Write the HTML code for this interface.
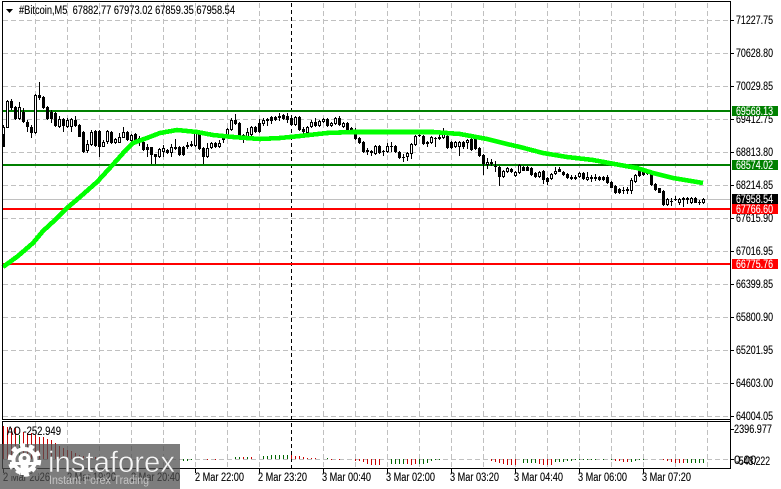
<!DOCTYPE html>
<html><head><meta charset="utf-8"><style>
html,body{margin:0;padding:0;background:#fff;width:781px;height:489px;overflow:hidden}
svg{display:block}
text{font-family:"Liberation Sans",sans-serif;font-size:11.5px;fill:#000;stroke:#000;stroke-width:.12px}
.w text{fill:#fff;stroke:#fff}
.g{stroke:#c0c0c0;stroke-width:1;stroke-dasharray:5 3;fill:none}
</style></head><body>
<svg width="781" height="489" viewBox="0 0 781 489" xmlns="http://www.w3.org/2000/svg">
<rect width="781" height="489" fill="#fff"/>
<g shape-rendering="crispEdges">
<path class="g" d="M3 20.5H730M3 53.5H730M3 86.5H730M3 119.5H730M3 152.5H730M3 185.5H730M3 218.5H730M3 251.5H730M3 284.5H730M3 317.5H730M3 350.5H730M3 383.5H730M3 416.5H730M3 459.5H730"/>
<path class="g" d="M35.5 3V420M67.5 3V420M99.5 3V420M131.5 3V420M163.5 3V420M195.5 3V420M227.5 3V420M259.5 3V420M323.5 3V420M355.5 3V420M387.5 3V420M419.5 3V420M451.5 3V420M483.5 3V420M515.5 3V420M547.5 3V420M579.5 3V420M611.5 3V420M643.5 3V420M675.5 3V420M707.5 3V420M35.5 422V468M67.5 422V468M99.5 422V468M131.5 422V468M163.5 422V468M195.5 422V468M227.5 422V468M259.5 422V468M323.5 422V468M355.5 422V468M387.5 422V468M419.5 422V468M451.5 422V468M483.5 422V468M515.5 422V468M547.5 422V468M579.5 422V468M611.5 422V468M643.5 422V468M675.5 422V468M707.5 422V468"/>
<path d="M3 199.5H730" stroke="#c0c0c0" fill="none"/>
<path d="M291.5 3V468" stroke="#000" stroke-dasharray="4 3" fill="none"/>
<path d="M3 110.5H730M3 111.5H730M3 164.5H730M3 165.5H730" stroke="#008000" fill="none"/>
<path d="M3 208.5H730M3 209.5H730M3 263.5H730M3 264.5H730" stroke="#f00" fill="none"/>
<!-- candle wicks -->
<path stroke="#000" fill="none" d="M3.5 125V147M7.5 100V128M11.5 99V110M15.5 106V120M19.5 102V120M23.5 108V123M27.5 120V132M31.5 125V138M35.5 94V134M39.5 82V100M43.5 96V109M47.5 106V120M51.5 110V123M55.5 112V127M59.5 116V128M63.5 118V132M67.5 118V128M71.5 118V132M75.5 116V127M79.5 124V137M83.5 131V153M87.5 140V153M91.5 130V146M95.5 130V147M99.5 130V157M103.5 140V147M107.5 130V144M111.5 131V144M115.5 138V144M119.5 133V143M123.5 127V138M127.5 131V141M131.5 134V142M135.5 133V141M139.5 136V146M143.5 141V151M147.5 144V157M151.5 147V164M155.5 154V164M159.5 148V158M163.5 145V157M167.5 149V154M171.5 144V157M175.5 139V150M179.5 146V156M183.5 146V156M187.5 142V149M191.5 141V147M195.5 131V147M199.5 131V150M203.5 147V164M207.5 143V158M211.5 142V149M215.5 142V148M219.5 140V148M223.5 136V143M227.5 128V138M231.5 118V131M235.5 114V125M239.5 122V137M243.5 134V143M247.5 128V138M251.5 126V136M255.5 126V133M259.5 119V133M263.5 118V126M267.5 118V126M271.5 116V124M275.5 116V121M279.5 113V121M283.5 114V120M287.5 113V123M291.5 117V126M295.5 116V126M299.5 116V131M303.5 127V134M307.5 126V134M311.5 120V128M315.5 118V127M319.5 120V127M323.5 118V123M327.5 118V127M331.5 122V127M335.5 117V125M339.5 116V126M343.5 122V128M347.5 122V132M351.5 127V132M355.5 128V140M359.5 137V144M363.5 141V153M367.5 148V155M371.5 150V156M375.5 145V155M379.5 145V154M383.5 150V156M387.5 143V153M391.5 142V152M395.5 145V153M399.5 151V159M403.5 154V162M407.5 152V161M411.5 143V159M415.5 135V146M419.5 133V137M423.5 135V145M427.5 141V147M431.5 136V144M435.5 137V147M439.5 135V140M443.5 128V139M447.5 135V149M451.5 141V149M455.5 141V148M459.5 141V156M463.5 141V149M467.5 139V149M471.5 138V151M475.5 138V150M479.5 147V157M483.5 154V175M487.5 158V169M491.5 159V166M495.5 161V172M499.5 166V186M503.5 170V178M507.5 167V173M511.5 168V173M515.5 171V177M519.5 164V174M523.5 166V171M527.5 166V171M531.5 167V176M535.5 172V178M539.5 171V178M543.5 170V184M547.5 177V185M551.5 173V180M555.5 167V175M559.5 167V172M563.5 171V176M567.5 173V179M571.5 175V180M575.5 175V180M579.5 172V178M583.5 172V180M587.5 172V181M591.5 175V182M595.5 174V181M599.5 176V181M603.5 176V181M607.5 175V184M611.5 181V188M615.5 185V194M619.5 188V194M623.5 187V194M627.5 187V194M631.5 178V194M635.5 174V183M639.5 167V177M643.5 170V176M647.5 169V175M651.5 172V186M655.5 183V191M659.5 188V193M663.5 190V206M667.5 198V206M671.5 198V206M675.5 196V201M679.5 198V205M683.5 197V207M687.5 197V204M691.5 197V204M695.5 197V203M699.5 200V205M703.5 198V204"/>
<!-- candle bodies -->
<path stroke="#000" stroke-width="3" fill="none" d="M3.5 127V147M7.5 101V128M11.5 101V108M15.5 107V119M19.5 107V119M23.5 112V122M27.5 122V127M31.5 127V133M35.5 95V133M39.5 95V98M43.5 97V108M47.5 107V119M51.5 112V119M55.5 113V126M59.5 119V127M63.5 119V126M67.5 120V127M71.5 119V127M75.5 120V126M79.5 125V137M83.5 132V152M87.5 144V151M91.5 132V145M95.5 131V146M99.5 131V147M103.5 142V147M107.5 131V142M111.5 132V143M115.5 139V143M119.5 137V143M123.5 132V138M127.5 132V140M131.5 135V141M135.5 134V140M139.5 138V142M143.5 142V150M147.5 147V150M151.5 147V155M155.5 154V157M159.5 149V157M163.5 148V152M167.5 150V153M171.5 147V153M175.5 147V149M179.5 147V155M183.5 147V155M187.5 145V147M191.5 144V146M195.5 132V146M199.5 132V149M203.5 148V157M207.5 148V157M211.5 143V148M215.5 143V147M219.5 143V147M223.5 137V140M227.5 129V137M231.5 120V130M235.5 120V124M239.5 123V136M243.5 135V137M247.5 132V137M251.5 127V135M255.5 127V132M259.5 123V132M263.5 120V124M267.5 119V121M271.5 117V121M275.5 117V120M279.5 116V118M283.5 115V119M287.5 116V120M291.5 118V125M295.5 117V125M299.5 117V130M303.5 129V132M307.5 127V133M311.5 122V127M315.5 122V126M319.5 121V126M323.5 119V122M327.5 119V126M331.5 123V126M335.5 118V124M339.5 118V125M343.5 123V127M347.5 123V131M351.5 128V131M355.5 130V139M359.5 138V143M363.5 142V152M367.5 150V152M371.5 151V153M375.5 146V154M379.5 146V153M383.5 151V152M387.5 146V152M391.5 146V147M395.5 146V152M399.5 152V158M403.5 157V158M407.5 153V157M411.5 144V154M415.5 136V145M419.5 135V136M423.5 136V144M427.5 142V144M431.5 137V143M435.5 138V139M439.5 137V139M443.5 132V138M447.5 136V148M451.5 142V148M455.5 142V147M459.5 142V147M463.5 142V147M467.5 140V143M471.5 139V150M475.5 139V149M479.5 148V156M483.5 155V164M487.5 162V165M491.5 162V164M495.5 166V167M499.5 167V177M503.5 171V177M507.5 168V172M511.5 169V172M515.5 172V176M519.5 165V173M523.5 167V171M527.5 167V171M531.5 168V175M535.5 173V177M539.5 172V177M543.5 171V180M547.5 178V182M551.5 174V179M555.5 171V174M559.5 169V172M563.5 172V175M567.5 174V178M571.5 177V179M575.5 177V179M579.5 173V177M583.5 173V179M587.5 177V180M591.5 177V179M595.5 177V179M599.5 177V180M603.5 177V180M607.5 177V183M611.5 182V188M615.5 186V193M619.5 189V193M623.5 190V191M627.5 189V191M631.5 180V191M635.5 175V182M639.5 167V176M643.5 172V175M647.5 173V174M651.5 173V185M655.5 184V190M659.5 188V193M663.5 191V205M667.5 199V205M671.5 201V202M675.5 199V200M679.5 199V203M683.5 198V200M687.5 198V200M691.5 198V203M695.5 198V203M699.5 202V203M703.5 199V203"/>
<path stroke="#fff" fill="none" d="M3.5 128V134M7.5 102V127M19.5 108V118M35.5 96V132M59.5 120V126M67.5 121V126M71.5 120V126M87.5 145V150M91.5 133V144M103.5 143V146M107.5 132V141M115.5 140V142M119.5 138V142M123.5 133V137M131.5 136V140M159.5 150V156M163.5 149V151M171.5 148V152M195.5 133V145M207.5 149V156M211.5 144V147M219.5 144V146M227.5 130V136M231.5 121V129M247.5 133V136M251.5 128V134M263.5 121V123M295.5 118V124M307.5 128V132M311.5 123V126M319.5 122V125M323.5 120V121M331.5 124V125M335.5 119V123M343.5 124V126M375.5 147V153M387.5 147V151M407.5 154V156M411.5 145V153M415.5 137V144M431.5 138V142M443.5 133V137M455.5 143V146M459.5 143V146M467.5 141V142M487.5 163V164M503.5 172V176M507.5 169V171M515.5 173V175M519.5 166V172M539.5 173V176M551.5 175V178M555.5 172V173M579.5 174V176M587.5 178V179M631.5 181V190M635.5 176V181M667.5 200V204M679.5 200V202M691.5 199V202M703.5 200V202"/>
</g>
<!-- moving average -->
<path fill="none" stroke="#00ff00" stroke-width="4.600" stroke-linejoin="round" shape-rendering="crispEdges" d="M3 267L18 256L33 243L43 231L55 220L67 208L80 197L97 182L108 170L117 160L125 151L133 143L147 138L160 133L177 130L197 132L213 135L233 137L260 139L280 138L300 136L327 133L353 132L393 132L433 132L460 134L487 139L507 144L520 147L543 153L567 157L593 160L620 165L637 168L653 173L673 178L703 183"/>
<!-- AO -->
<g shape-rendering="crispEdges" fill="none">
<path stroke="#c80000" d="M3.500 426V459M7.500 427V459M11.500 428V459M15.500 428V459M23.500 432V459M27.500 433V459M31.500 433V459M35.500 435V459M39.500 437V459M43.500 437V459M47.500 439V459M51.500 440V459M55.500 443V459M59.500 446V459M63.500 448V459M67.500 450V459M71.500 451V459M75.500 453V459M79.500 455V459M83.500 456V459M91.500 457V459M95.500 457V459M99.500 458V459M115.500 458V459M207.500 459V460M215.500 459V460M243.500 457V459M251.500 457V459M291.500 455V459M295.500 456V459M299.500 456V459M303.500 457V459M307.500 458V459M311.500 458V459M315.500 458V459M331.500 459V460M339.500 459V460M355.500 459V461M359.500 459V461M363.500 459V462M367.500 459V464M371.500 459V465M375.500 459V465M379.500 459V465M407.500 459V464M411.500 459V465M415.500 459V464M491.500 459V461M495.500 459V462M499.500 459V463M503.500 459V464M507.500 459V465M511.500 459V465M515.500 459V465M539.500 459V464M543.500 459V465M547.500 459V465M551.500 459V465M615.500 459V461M619.500 459V461M623.500 459V462M627.500 459V462M663.500 459V460M667.500 459V461M671.500 459V462M675.500 459V463M679.500 459V463M683.500 459V463"/>
<path stroke="#006400" d="M19.500 435V459M183.500 459V461M187.500 459V461M191.500 459V460M235.500 457V459M239.500 457V459M247.500 457V459M263.500 456V459M267.500 456V459M271.500 455V459M275.500 455V459M279.500 455V459M283.500 455V459M287.500 455V459M327.500 458V459M391.500 459V464M395.500 459V464M399.500 459V464M403.500 459V464M419.500 459V464M423.500 459V464M427.500 459V463M431.500 459V461M435.500 459V460M439.500 459V460M523.500 459V463M527.500 459V463M531.500 459V463M535.500 459V463M555.500 459V462M559.500 459V462M563.500 459V462M567.500 459V461M571.500 459V461M575.500 459V460M579.500 459V460M583.500 459V460M587.500 459V460M591.500 459V460M595.500 459V460M603.500 459V460M611.500 459V460M631.500 459V462M635.500 459V461M639.500 459V460M643.500 459V460M687.500 459V463M691.500 459V463M695.500 459V463M699.500 459V463M703.500 459V463"/>
</g>
<!-- frame -->
<g shape-rendering="crispEdges" fill="none" stroke="#000">
<path d="M2.500 2V420M2.500 422V468M730.500 2V468M2 1.500H731M2 419.500H731M2 421.500H731M2 468.500H731"/>
<path d="M731 20.500H734M731 53.500H734M731 86.500H734M731 119.500H734M731 152.500H734M731 185.500H734M731 218.500H734M731 251.500H734M731 284.500H734M731 317.500H734M731 350.500H734M731 383.500H734M731 416.500H734M731 429.500H734M731 459.500H734M3.500 469V473M195.500 469V473M259.500 469V473M323.500 469V473M387.500 469V473M451.500 469V473M515.500 469V473M579.500 469V473M643.500 469V473"/>
</g>
<path d="M6 9h7l-3.500 4z" fill="#000"/>
<text x="19" y="14" textLength="216" lengthAdjust="spacingAndGlyphs">#Bitcoin,M5&#160;&#160;67882.77 67973.02 67859.35 67958.54</text>
<!-- price labels -->
<g>
<text x="736" y="24" textLength="37" lengthAdjust="spacingAndGlyphs">71227.75</text>
<text x="736" y="57" textLength="37" lengthAdjust="spacingAndGlyphs">70628.80</text>
<text x="736" y="90" textLength="37" lengthAdjust="spacingAndGlyphs">70029.85</text>
<text x="736" y="123" textLength="37" lengthAdjust="spacingAndGlyphs">69412.75</text>
<text x="736" y="156" textLength="37" lengthAdjust="spacingAndGlyphs">68813.80</text>
<text x="736" y="189" textLength="37" lengthAdjust="spacingAndGlyphs">68214.85</text>
<text x="736" y="222" textLength="37" lengthAdjust="spacingAndGlyphs">67615.90</text>
<text x="736" y="255" textLength="37" lengthAdjust="spacingAndGlyphs">67016.95</text>
<text x="736" y="288" textLength="37" lengthAdjust="spacingAndGlyphs">66399.85</text>
<text x="736" y="321" textLength="37" lengthAdjust="spacingAndGlyphs">65800.90</text>
<text x="736" y="354" textLength="37" lengthAdjust="spacingAndGlyphs">65201.95</text>
<text x="736" y="387" textLength="37" lengthAdjust="spacingAndGlyphs">64603.00</text>
<text x="736" y="420" textLength="37" lengthAdjust="spacingAndGlyphs">64004.05</text>
<text x="734" y="433" textLength="38" lengthAdjust="spacingAndGlyphs">2396.977</text>
<text x="734" y="464">0.00</text>
<text x="736" y="465" textLength="34" lengthAdjust="spacingAndGlyphs">-543.222</text>
</g>
<g shape-rendering="crispEdges">
<rect x="732" y="106" width="46" height="10" fill="#008000"/>
<rect x="732" y="160" width="46" height="10" fill="#008000"/>
<rect x="732" y="194" width="46" height="10" fill="#000"/>
<rect x="732" y="204" width="46" height="10" fill="#f00"/>
<rect x="732" y="259" width="46" height="10" fill="#f00"/>
</g>
<g class="w">
<text x="736" y="115" textLength="37" lengthAdjust="spacingAndGlyphs">69568.13</text>
<text x="736" y="169" textLength="37" lengthAdjust="spacingAndGlyphs">68574.02</text>
<text x="736" y="203" textLength="37" lengthAdjust="spacingAndGlyphs">67958.54</text>
<text x="736" y="213" textLength="37" lengthAdjust="spacingAndGlyphs">67766.60</text>
<text x="736" y="268" textLength="37" lengthAdjust="spacingAndGlyphs">66775.76</text>
</g>
<!-- time labels -->
<g>
<text x="3" y="481" textLength="47" lengthAdjust="spacingAndGlyphs">2 Mar 2026</text>
<text x="67" y="481" textLength="49" lengthAdjust="spacingAndGlyphs">2 Mar 19:20</text>
<text x="131" y="481" textLength="49" lengthAdjust="spacingAndGlyphs">2 Mar 20:40</text>
<text x="195" y="481" textLength="49" lengthAdjust="spacingAndGlyphs">2 Mar 22:00</text>
<text x="258" y="481" textLength="49" lengthAdjust="spacingAndGlyphs">2 Mar 23:20</text>
<text x="322" y="481" textLength="49" lengthAdjust="spacingAndGlyphs">3 Mar 00:40</text>
<text x="386" y="481" textLength="49" lengthAdjust="spacingAndGlyphs">3 Mar 02:00</text>
<text x="450" y="481" textLength="49" lengthAdjust="spacingAndGlyphs">3 Mar 03:20</text>
<text x="514" y="481" textLength="49" lengthAdjust="spacingAndGlyphs">3 Mar 04:40</text>
<text x="578" y="481" textLength="49" lengthAdjust="spacingAndGlyphs">3 Mar 06:00</text>
<text x="642" y="481" textLength="49" lengthAdjust="spacingAndGlyphs">3 Mar 07:20</text>
</g>
<text x="7" y="435" textLength="54" lengthAdjust="spacingAndGlyphs">AO -252.949</text>
<!-- watermark -->
<rect x="0" y="444" width="180" height="45" fill="#505050" fill-opacity=".74"/>
<g fill="#fff" stroke="none">
<circle cx="24.500" cy="460" r="11" fill="none" stroke="#fff" stroke-width="4"/>
<circle cx="24.500" cy="460" r="14.500" fill="none" stroke="#fff" stroke-width="4.500" stroke-dasharray="5 4.110"/>
<circle cx="24.500" cy="459" r="6"/>
<path d="M20.500 462h8v13h-8zM10 462h29v3H10z"/>
</g>
<circle cx="24.500" cy="458" r="2" fill="#777"/>
<path d="M12 467.500q3 6 7 6.500v2h-9zM37 467.500q-3 6-7 6.500v2h9z" fill="#787878"/>
<text x="48" y="472" textLength="127" lengthAdjust="spacingAndGlyphs" style="font-size:30px;fill:#f6f6f6;stroke:#767676;stroke-width:.5px">instaforex</text>
<text x="49" y="484" textLength="100" lengthAdjust="spacingAndGlyphs" style="font-size:11.500px;fill:#c4c4c4;stroke:none">Instant Forex Trading</text>
</svg>
</body></html>
